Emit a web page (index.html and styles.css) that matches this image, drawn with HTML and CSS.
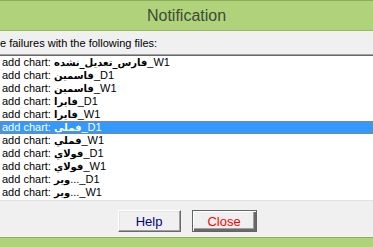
FILE: index.html
```html
<!DOCTYPE html>
<html lang="en">
<head>
  <meta charset="UTF-8">
  <title>Notification</title>
  <link rel="stylesheet" href="styles.css">
</head>
<body>
  <div class="window">
    <div class="titlebar">Notification</div>
    <div class="message">e failures with the following files:</div>
    <ul class="file-list">
      <li>add chart: <span class="ar">فارس_تعديل_نشده</span>_W1</li>
      <li>add chart: <span class="ar">فاسمين</span>_D1</li>
      <li>add chart: <span class="ar">فاسمين</span>_W1</li>
      <li>add chart: <span class="ar">فايرا</span>_D1</li>
      <li>add chart: <span class="ar">فايرا</span>_W1</li>
      <li class="selected">add chart: <span class="ar">فملي</span>_D1</li>
      <li>add chart: <span class="ar">فملي</span>_W1</li>
      <li>add chart: <span class="ar">فولاي</span>_D1</li>
      <li>add chart: <span class="ar">فولاي</span>_W1</li>
      <li>add chart: <span class="ar">وير</span>..._D1</li>
      <li>add chart: <span class="ar">وير</span>..._W1</li>
    </ul>
    <div class="footer">
      <button class="btn btn-help">Help</button>
      <button class="btn btn-close">Close</button>
    </div>
    <div class="bottombar"></div>
  </div>
</body>
</html>
```

FILE: styles.css
```css
body {
  margin: 0;
  padding: 0;
  font-family: "Liberation Sans", Arial, "DejaVu Sans", sans-serif;
  font-size: 11px;
  background-color: #f0f0f0;
  overflow: hidden;
}

.window {
  width: 373px;
  height: 247px;
  display: flex;
  flex-direction: column;
}

.titlebar {
  height: 29px;
  border-top: 1px solid #8eae5c;
  background-color: #b0d27a;
  color: #3e4a38;
  font-size: 16px;
  line-height: 30px;
  text-align: center;
}

.message {
  height: 23px;
  border-top: 1px solid #98ba66;
  line-height: 24px;
  color: #000;
  white-space: nowrap;
}

.file-list {
  list-style: none;
  margin: 0;
  padding: 0;
  height: 144px;
  border-top: 1px solid #a0a0a0;
  box-shadow: inset 0 1px #696969;
  padding-top: 1px;
  border-bottom: 1px solid #e3e3e3;
  background-color: #fff;
}

.file-list li {
  height: 13px;
  line-height: 13px;
  padding-left: 2px;
  color: #000;
  white-space: nowrap;
}

.file-list .ar {
  font-family: "DejaVu Sans", sans-serif;
  font-weight: bold;
  font-size: 10px;
}

.file-list li.selected {
  background-color: #3399ff;
  color: #fff;
  outline: 1px dotted #c8742a;
  outline-offset: -1px;
}

.footer {
  height: 36px;
  display: flex;
  justify-content: center;
  align-items: flex-start;
  gap: 11px;
  padding-top: 9px;
  padding-left: 1px;
  box-sizing: border-box;
}

.btn {
  height: 22px;
  padding: 0;
  font-family: "Liberation Sans", Arial, sans-serif;
  font-size: 13px;
  background-color: #f0f0f0;
  cursor: pointer;
}

.btn-help {
  width: 63px;
  color: #000080;
  border: 1px solid;
  border-color: #fff #696969 #696969 #fff;
  box-shadow: inset -1px -1px #a0a0a0, inset 1px 1px #e3e3e3;
}

.btn-close {
  width: 65px;
  color: #ff0000;
  border: 1px solid #646464;
  box-shadow: inset 1px 1px #fff, inset -2px -2px #696969, inset -3px -3px #a0a0a0;
}

.bottombar {
  flex: 1;
  border-top: 1px solid #8eae5c;
  background-color: #b0d27a;
}
```
